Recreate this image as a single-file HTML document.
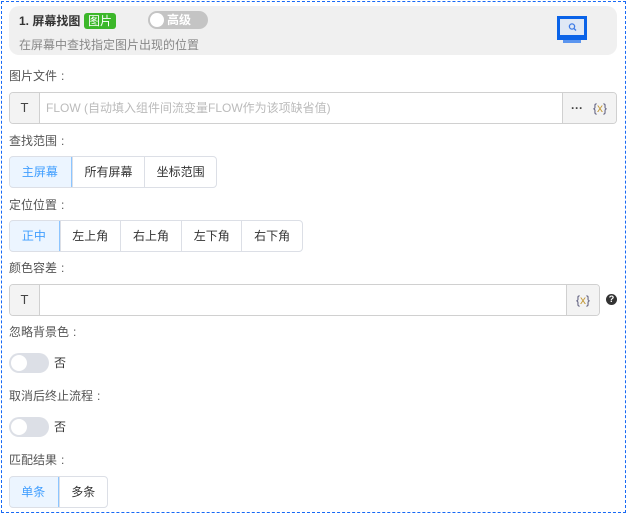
<!DOCTYPE html>
<html><head><meta charset="utf-8"><style>
*{box-sizing:border-box;margin:0;padding:0}
body{width:630px;height:518px;background:#fff;font-family:"Liberation Sans","Noto Sans CJK SC",sans-serif;font-size:12px;color:#333;position:relative;overflow:hidden}
.abs{position:absolute}
.frame{left:1px;top:1px;width:625px;height:512px;border:1px dashed #1769f5}
.hdr{left:9px;top:6px;width:608px;height:49px;background:#f0f0f0;border-radius:10px}
.lbl{left:9px;color:#555;font-size:12px;line-height:14px}
.lbl i{font-style:normal;margin-left:4px}
.inp{left:9px;height:32px;border:1px solid #d0d0d0;border-radius:4px;overflow:hidden;background:#fff}
.t{position:absolute;left:0;top:0;width:30px;height:100%;background:#f3f3f3;border-right:1px solid #d0d0d0;text-align:center;line-height:30px;color:#444;font-size:13px}
.add{position:absolute;right:0;top:0;height:100%;background:#f3f3f3;border-left:1px solid #d0d0d0;line-height:30px;color:#666}
.grp{left:9px;height:32px;display:flex;border:1px solid #dcdfe6;border-radius:4px;overflow:hidden}
.grp div{height:100%;line-height:30px;text-align:center;border-left:1px solid #dcdfe6;color:#333}
.grp div:first-child{border-left:none}
.grp .on{background:#ecf5ff;color:#409eff;border:1px solid #8cc5ff;margin:-1px 0 -1px -1px;height:32px;line-height:30px;border-radius:4px 0 0 4px}
.tg{left:9px;width:40px;height:20px;border-radius:10px;background:#dcdfe6}
.tg::after{content:"";position:absolute;left:2px;top:2px;width:16px;height:16px;border-radius:50%;background:#fff}
.x{color:#c49a3a}
</style></head><body>
<div class="abs frame"></div>
<div class="abs hdr"></div>
<div class="abs" style="left:19px;top:13px;font-weight:bold;font-size:12px;line-height:16px;color:#333">1. 屏幕找图</div>
<div class="abs" style="left:84px;top:13px;width:32px;height:16px;background:#3cb72a;border-radius:3px;color:#fff;font-size:12px;line-height:16px;text-align:center">图片</div>
<div class="abs" style="left:148px;top:11px;width:60px;height:18px;border-radius:9px;background:#c4c4c4"></div>
<div class="abs" style="left:150px;top:13px;width:14px;height:14px;border-radius:50%;background:#fff"></div>
<div class="abs" style="left:167px;top:12px;color:#fff;font-weight:bold;font-size:12px;line-height:16px">高级</div>
<div class="abs" style="left:19px;top:37px;color:#888;font-size:12px;line-height:16px">在屏幕中查找指定图片出现的位置</div>
<svg class="abs" style="left:557px;top:16px" width="31" height="29" viewBox="0 0 31 29">
<rect x="0" y="0" width="30" height="24" fill="#0a63e8"/>
<rect x="3" y="3" width="24" height="16" fill="#dfe8f5"/>
<rect x="6" y="24" width="18" height="3" fill="#5b95ef"/>
<circle cx="15" cy="10.5" r="2.6" fill="none" stroke="#3d7be6" stroke-width="1.3"/>
<line x1="17" y1="12.5" x2="19" y2="14.5" stroke="#3d7be6" stroke-width="1.3"/>
</svg>

<div class="abs lbl" style="top:69px">图片文件<i>:</i></div>
<div class="abs inp" style="top:92px;width:608px">
<div class="t">T</div>
<div class="abs" style="left:36px;top:0;line-height:30px;color:#bbb">FLOW (自动填入组件间流变量FLOW作为该项缺省值)</div>
<div class="add" style="width:54px"><span style="position:absolute;left:8px;font-weight:bold;color:#444">···</span><span style="position:absolute;left:30px;color:#557">{<span class="x">x</span>}</span></div>
</div>

<div class="abs lbl" style="top:134px">查找范围<i>:</i></div>
<div class="abs grp" style="top:156px;width:208px">
<div class="on" style="width:63px">主屏幕</div><div style="width:73px">所有屏幕</div><div style="width:72px">坐标范围</div>
</div>

<div class="abs lbl" style="top:198px">定位位置<i>:</i></div>
<div class="abs grp" style="top:220px;width:294px">
<div class="on" style="width:51px">正中</div><div style="width:60px">左上角</div><div style="width:62px">右上角</div><div style="width:60px">左下角</div><div style="width:61px">右下角</div>
</div>

<div class="abs lbl" style="top:261px">颜色容差<i>:</i></div>
<div class="abs inp" style="top:284px;width:591px">
<div class="t">T</div>
<div class="add" style="width:33px;text-align:center;color:#557">{<span class="x">x</span>}</div>
</div>
<div class="abs" style="left:606px;top:294px;width:11px;height:11px;border-radius:50%;background:#333;color:#fff;font-size:9px;line-height:11px;text-align:center;font-weight:bold">?</div>

<div class="abs lbl" style="top:325px">忽略背景色<i>:</i></div>
<div class="abs tg" style="top:353px"></div>
<div class="abs" style="left:54px;top:356px;line-height:14px">否</div>

<div class="abs lbl" style="top:389px">取消后终止流程<i>:</i></div>
<div class="abs tg" style="top:417px"></div>
<div class="abs" style="left:54px;top:420px;line-height:14px">否</div>

<div class="abs lbl" style="top:453px">匹配结果<i>:</i></div>
<div class="abs grp" style="top:476px;width:99px">
<div class="on" style="width:50px">单条</div><div style="width:49px">多条</div>
</div>
</body></html>
